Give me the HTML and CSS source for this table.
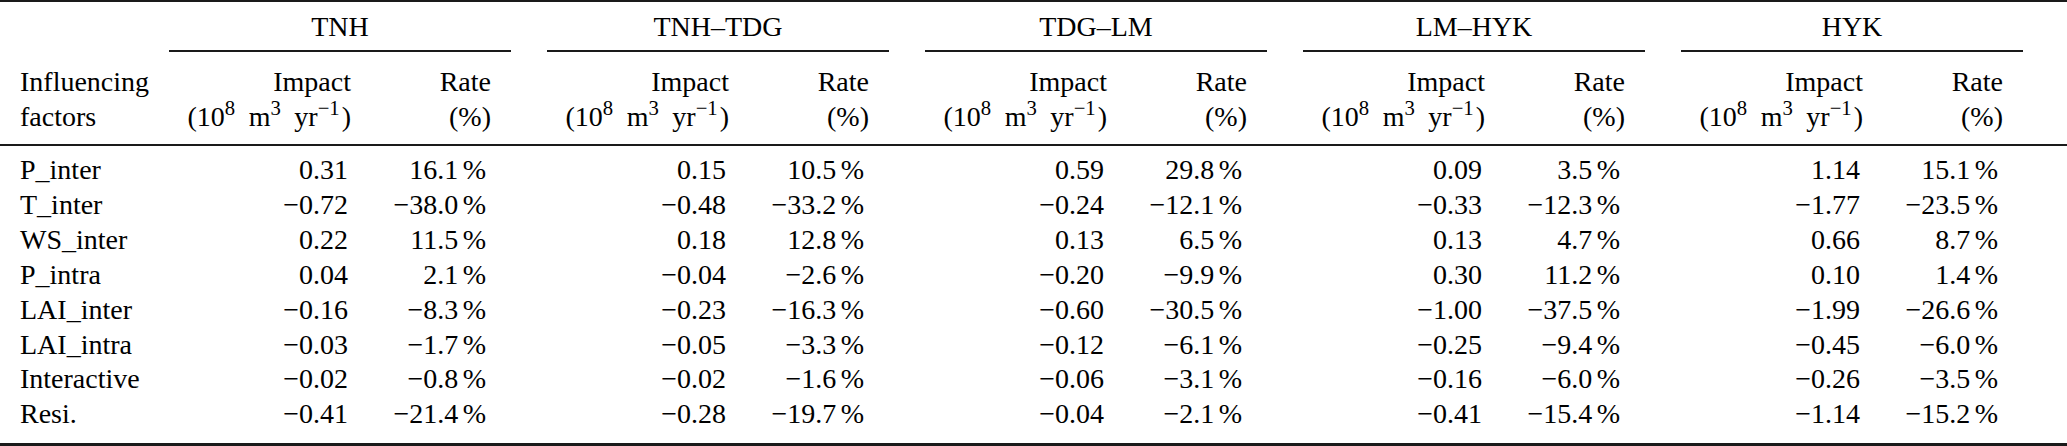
FILE: index.html
```html
<!DOCTYPE html>
<html lang="en">
<head>
<meta charset="utf-8">
<title>Influencing factors</title>
<link rel="stylesheet" href="styles.css">
</head>
<body>
<div class="tbl">
  <div class="row">
    <div class="lab"></div>
    <div class="grp">TNH</div>
    <div class="grp">TNH–TDG</div>
    <div class="grp">TDG–LM</div>
    <div class="grp">LM–HYK</div>
    <div class="grp">HYK</div>
  </div>
  <div class="row hd">
    <div class="lab">Influencing</div>
    <div class="h">Impact</div><div class="h">Rate</div>
    <div class="h">Impact</div><div class="h">Rate</div>
    <div class="h">Impact</div><div class="h">Rate</div>
    <div class="h">Impact</div><div class="h">Rate</div>
    <div class="h">Impact</div><div class="h">Rate</div>
  </div>
  <div class="row hd">
    <div class="lab">factors</div>
    <div class="h"><span class="unit">(10<sup>8</sup> m<sup>3</sup> yr<sup>−1</sup>)</span></div><div class="h">(%)</div>
    <div class="h"><span class="unit">(10<sup>8</sup> m<sup>3</sup> yr<sup>−1</sup>)</span></div><div class="h">(%)</div>
    <div class="h"><span class="unit">(10<sup>8</sup> m<sup>3</sup> yr<sup>−1</sup>)</span></div><div class="h">(%)</div>
    <div class="h"><span class="unit">(10<sup>8</sup> m<sup>3</sup> yr<sup>−1</sup>)</span></div><div class="h">(%)</div>
    <div class="h"><span class="unit">(10<sup>8</sup> m<sup>3</sup> yr<sup>−1</sup>)</span></div><div class="h">(%)</div>
  </div>
  <div class="mid"></div>
  <div class="row dr">
    <div class="lab">P_inter</div>
    <div class="i">0.31</div><div class="r">16.1<span class="pc">%</span></div>
    <div class="i">0.15</div><div class="r">10.5<span class="pc">%</span></div>
    <div class="i">0.59</div><div class="r">29.8<span class="pc">%</span></div>
    <div class="i">0.09</div><div class="r">3.5<span class="pc">%</span></div>
    <div class="i">1.14</div><div class="r">15.1<span class="pc">%</span></div>
  </div>
  <div class="row dr">
    <div class="lab">T_inter</div>
    <div class="i">−0.72</div><div class="r">−38.0<span class="pc">%</span></div>
    <div class="i">−0.48</div><div class="r">−33.2<span class="pc">%</span></div>
    <div class="i">−0.24</div><div class="r">−12.1<span class="pc">%</span></div>
    <div class="i">−0.33</div><div class="r">−12.3<span class="pc">%</span></div>
    <div class="i">−1.77</div><div class="r">−23.5<span class="pc">%</span></div>
  </div>
  <div class="row dr">
    <div class="lab">WS_inter</div>
    <div class="i">0.22</div><div class="r">11.5<span class="pc">%</span></div>
    <div class="i">0.18</div><div class="r">12.8<span class="pc">%</span></div>
    <div class="i">0.13</div><div class="r">6.5<span class="pc">%</span></div>
    <div class="i">0.13</div><div class="r">4.7<span class="pc">%</span></div>
    <div class="i">0.66</div><div class="r">8.7<span class="pc">%</span></div>
  </div>
  <div class="row dr">
    <div class="lab">P_intra</div>
    <div class="i">0.04</div><div class="r">2.1<span class="pc">%</span></div>
    <div class="i">−0.04</div><div class="r">−2.6<span class="pc">%</span></div>
    <div class="i">−0.20</div><div class="r">−9.9<span class="pc">%</span></div>
    <div class="i">0.30</div><div class="r">11.2<span class="pc">%</span></div>
    <div class="i">0.10</div><div class="r">1.4<span class="pc">%</span></div>
  </div>
  <div class="row dr">
    <div class="lab">LAI_inter</div>
    <div class="i">−0.16</div><div class="r">−8.3<span class="pc">%</span></div>
    <div class="i">−0.23</div><div class="r">−16.3<span class="pc">%</span></div>
    <div class="i">−0.60</div><div class="r">−30.5<span class="pc">%</span></div>
    <div class="i">−1.00</div><div class="r">−37.5<span class="pc">%</span></div>
    <div class="i">−1.99</div><div class="r">−26.6<span class="pc">%</span></div>
  </div>
  <div class="row dr">
    <div class="lab">LAI_intra</div>
    <div class="i">−0.03</div><div class="r">−1.7<span class="pc">%</span></div>
    <div class="i">−0.05</div><div class="r">−3.3<span class="pc">%</span></div>
    <div class="i">−0.12</div><div class="r">−6.1<span class="pc">%</span></div>
    <div class="i">−0.25</div><div class="r">−9.4<span class="pc">%</span></div>
    <div class="i">−0.45</div><div class="r">−6.0<span class="pc">%</span></div>
  </div>
  <div class="row dr">
    <div class="lab">Interactive</div>
    <div class="i">−0.02</div><div class="r">−0.8<span class="pc">%</span></div>
    <div class="i">−0.02</div><div class="r">−1.6<span class="pc">%</span></div>
    <div class="i">−0.06</div><div class="r">−3.1<span class="pc">%</span></div>
    <div class="i">−0.16</div><div class="r">−6.0<span class="pc">%</span></div>
    <div class="i">−0.26</div><div class="r">−3.5<span class="pc">%</span></div>
  </div>
  <div class="row dr">
    <div class="lab">Resi.</div>
    <div class="i">−0.41</div><div class="r">−21.4<span class="pc">%</span></div>
    <div class="i">−0.28</div><div class="r">−19.7<span class="pc">%</span></div>
    <div class="i">−0.04</div><div class="r">−2.1<span class="pc">%</span></div>
    <div class="i">−0.41</div><div class="r">−15.4<span class="pc">%</span></div>
    <div class="i">−1.14</div><div class="r">−15.2<span class="pc">%</span></div>
  </div>
</div>
</body>
</html>
```

FILE: styles.css
```css
html, body {
  margin: 0;
  padding: 0;
  background: #ffffff;
}

.tbl {
  width: 2067px;
  box-sizing: border-box;
  display: grid;
  grid-template-columns: 151px repeat(5, 238px 140px) 1fr;
  border-top: 2px solid #1a1a1a;
  border-bottom: 3px solid #1a1a1a;
  padding-bottom: 10.8px;
  font-family: "Liberation Serif", "Times New Roman", serif;
  font-size: 28px;
  color: #000000;
}

.row {
  display: contents;
}

.lab {
  grid-column: 1;
  padding-left: 20px;
  white-space: nowrap;
}

.grp {
  grid-column: span 2;
  margin: 0 18px 12px;
  padding: 7px 0 5.5px;
  border-bottom: 2px solid #1a1a1a;
  text-align: center;
  line-height: 35px;
}

.hd > * {
  line-height: 35px;
}

.h {
  text-align: right;
  padding-right: 38px;
  white-space: nowrap;
}

.unit {
  word-spacing: 0.16em;
}

.unit sup {
  font-size: 0.74em;
  line-height: 0;
  vertical-align: 0.5em;
  margin-right: 2px;
}

.mid {
  grid-column: 1 / -1;
  height: 2px;
  background: #1a1a1a;
  margin: 10.5px 0 7px;
}

.dr > * {
  line-height: 34.9px;
  white-space: nowrap;
}

.i {
  text-align: right;
  padding-right: 41px;
}

.r {
  text-align: right;
  padding-right: 43px;
}

.pc {
  margin-left: 0.16em;
}
```
